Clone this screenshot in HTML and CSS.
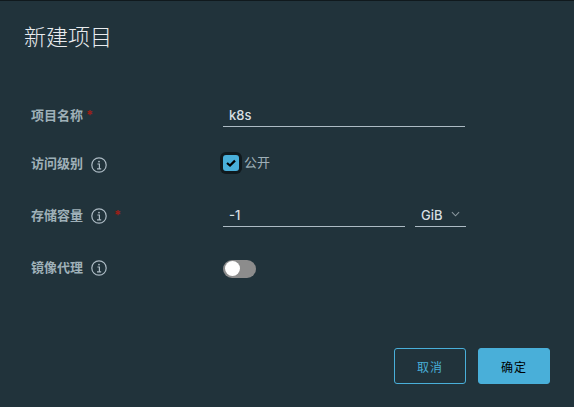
FILE: index.html
```html
<!DOCTYPE html>
<html lang="zh-CN">
<head>
    <meta charset="UTF-8">
    <meta name="viewport" content="width=device-width, initial-scale=1.0">
    <title>新建项目</title>
    <link rel="stylesheet" href="styles.css">
</head>
<body>
    <div class="modal">
        <h3 class="modal-title">新建项目</h3>

        <form class="project-form">
            <div class="form-row row-name">
                <label class="form-label">项目名称<span class="required">*</span></label>
                <div class="text-input input-full">k8s</div>
            </div>

            <div class="form-row row-access">
                <label class="form-label">访问级别
                    <svg class="info-icon" viewBox="0 0 16 16" fill="none" stroke="currentColor">
                        <circle cx="8" cy="8" r="7.2" stroke-width="1.2"></circle>
                        <circle cx="8" cy="4.6" r="0.9" fill="currentColor" stroke="none"></circle>
                        <path d="M6.4 7h2v4.6M6 11.8h4.2" stroke-width="1.2"></path>
                    </svg>
                </label>
                <div class="checkbox-wrap">
                    <span class="checkbox">
                        <svg viewBox="0 0 16 16" fill="none" stroke="#000" stroke-width="2.2">
                            <path d="M4 8l3 2.6L12 5.6"></path>
                        </svg>
                    </span>
                    <span class="checkbox-label">公开</span>
                </div>
            </div>

            <div class="form-row row-storage">
                <label class="form-label">存储容量
                    <svg class="info-icon" viewBox="0 0 16 16" fill="none" stroke="currentColor">
                        <circle cx="8" cy="8" r="7.2" stroke-width="1.2"></circle>
                        <circle cx="8" cy="4.6" r="0.9" fill="currentColor" stroke="none"></circle>
                        <path d="M6.4 7h2v4.6M6 11.8h4.2" stroke-width="1.2"></path>
                    </svg>
                    <span class="required required-after-icon">*</span>
                </label>
                <div class="storage-fields">
                    <div class="text-input input-size">-1</div>
                    <div class="unit-select">
                        <span>GiB</span>
                        <svg class="chevron" viewBox="0 0 10 6" fill="none" stroke="currentColor" stroke-width="1.2">
                            <path d="M1 1l4 4 4-4"></path>
                        </svg>
                    </div>
                </div>
            </div>

            <div class="form-row row-proxy">
                <label class="form-label">镜像代理
                    <svg class="info-icon" viewBox="0 0 16 16" fill="none" stroke="currentColor">
                        <circle cx="8" cy="8" r="7.2" stroke-width="1.2"></circle>
                        <circle cx="8" cy="4.6" r="0.9" fill="currentColor" stroke="none"></circle>
                        <path d="M6.4 7h2v4.6M6 11.8h4.2" stroke-width="1.2"></path>
                    </svg>
                </label>
                <div class="toggle"><span class="toggle-knob"></span></div>
            </div>
        </form>

        <div class="modal-footer">
            <button class="btn btn-outline">取消</button>
            <button class="btn btn-primary">确定</button>
        </div>
    </div>
</body>
</html>
```

FILE: styles.css
```css
* {
    margin: 0;
    padding: 0;
    box-sizing: border-box;
}

body {
    font-family: Inter, "Noto Sans CJK SC", sans-serif;
    background: #21333b;
    width: 574px;
    height: 407px;
    overflow: hidden;
}

.modal {
    height: 407px;
    padding: 23px 24px 23px 24px;
    border-top: 1px solid #10191d;
    display: flex;
    flex-direction: column;
}

.modal-title {
    font-size: 22px;
    font-weight: 300;
    line-height: 26px;
    color: #e9ecef;
}

.project-form {
    flex: 1;
    padding: 51px 0 0 7px;
}

.form-row {
    display: flex;
    align-items: center;
}

.row-name {
    height: 28px;
}

.row-access {
    height: 28px;
    margin-top: 20px;
}

.row-storage {
    height: 28px;
    margin-top: 24px;
}

.row-proxy {
    height: 28px;
    margin-top: 25px;
}

.form-label {
    width: 192px;
    display: flex;
    align-items: center;
    font-size: 13px;
    font-weight: 700;
    color: #9fb0b8;
    margin-top: -1px;
}

.row-proxy .form-label {
    margin-top: -3px;
}

.required {
    color: #9a2018;
    margin-left: 3px;
    font-size: 13px;
}

.required-after-icon {
    margin-left: 7px;
}

.info-icon {
    width: 16px;
    height: 16px;
    margin-left: 8px;
    margin-top: 3px;
    color: #adbbc4;
}

.row-access .info-icon {
    margin-top: 5px;
}

.text-input {
    height: 24px;
    border-bottom: 1px solid #adbbc4;
    padding: 3px 6px 0;
    font-size: 13px;
    font-weight: 500;
    line-height: 18px;
    color: #d8dfe3;
}

.input-full {
    width: 242px;
}

.input-size {
    width: 182px;
}

.storage-fields {
    display: flex;
    gap: 10px;
}

.unit-select {
    width: 51px;
    height: 24px;
    border-bottom: 1px solid #adbbc4;
    padding: 3px 6px 0;
    font-size: 13px;
    font-weight: 500;
    line-height: 18px;
    color: #d8dfe3;
    display: flex;
    align-items: flex-start;
    gap: 8px;
}

.chevron {
    width: 9px;
    height: 6px;
    margin-top: 5px;
    color: #8a979e;
}

.checkbox-wrap {
    display: flex;
    align-items: center;
    gap: 5px;
}

.checkbox {
    width: 16px;
    height: 16px;
    border-radius: 3px;
    background: #49afd9;
    box-shadow: 0 0 0 3px #10191d;
    display: flex;
}

.checkbox-label {
    font-size: 13px;
    color: #9fb0b8;
    margin-top: -3px;
}

.toggle {
    width: 33px;
    height: 18px;
    border-radius: 9px;
    background: #8c8c8c;
    padding: 1px 2px;
    margin-top: 2px;
}

.toggle-knob {
    display: block;
    width: 15px;
    height: 15px;
    border-radius: 50%;
    background: #fff;
}

.modal-footer {
    display: flex;
    justify-content: flex-end;
    gap: 12px;
}

.btn {
    width: 72px;
    height: 36px;
    border-radius: 3px;
    font-family: inherit;
    font-size: 12px;
    letter-spacing: 1px;
}

.btn-outline {
    background: transparent;
    border: 1px solid #49afd9;
    color: #49afd9;
}

.btn-primary {
    background: #49afd9;
    border: 1px solid #49afd9;
    color: #000;
}
```
